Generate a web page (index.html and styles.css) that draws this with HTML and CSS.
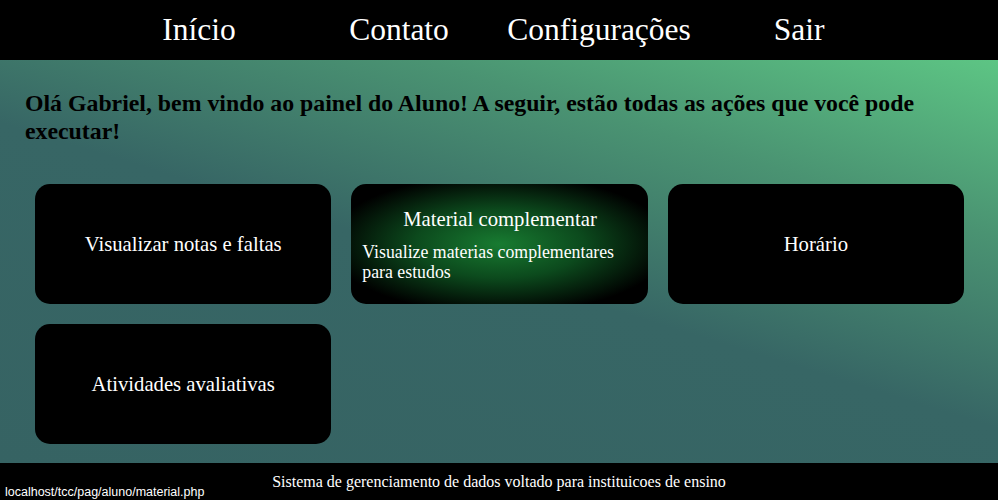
FILE: index.html
```html
<!DOCTYPE html>
<html lang="pt-BR">
<head>
<meta charset="utf-8">
<title>Painel do Aluno</title>
<link rel="stylesheet" href="styles.css">
</head>
<body>
<nav class="nav">
  <a class="nav-item" href="#">Início</a>
  <a class="nav-item" href="#">Contato</a>
  <a class="nav-item" href="#">Configurações</a>
  <a class="nav-item" href="#">Sair</a>
</nav>
<main class="main">
  <h1 class="greeting">Olá Gabriel, bem vindo ao painel do Aluno! A seguir, estão todas as ações que você pode executar!</h1>
  <section class="cards">
    <a class="card" href="#"><span class="card-title">Visualizar notas e faltas</span></a>
    <a class="card card-active" href="#">
      <span class="card-title">Material complementar</span>
      <span class="card-desc">Visualize materias complementares para estudos</span>
    </a>
    <a class="card" href="#"><span class="card-title">Horário</span></a>
    <a class="card" href="#"><span class="card-title">Atividades avaliativas</span></a>
  </section>
</main>
<footer class="footer">Sistema de gerenciamento de dados voltado para instituicoes de ensino</footer>
<div class="status">localhost/tcc/pag/aluno/material.php</div>
</body>
</html>
```
FILE: styles.css
```css
* { box-sizing: border-box; }
html, body { height: 100%; }
body {
  margin: 0;
  font-family: "Liberation Serif", "Times New Roman", serif;
  display: flex;
  flex-direction: column;
  background: #366363;
  overflow: hidden;
}
.nav {
  height: 60px;
  background: #000;
  display: flex;
  justify-content: center;
  align-items: center;
  flex-shrink: 0;
}
.nav-item {
  width: 200px;
  text-align: center;
  color: #fff;
  text-decoration: none;
  font-size: 31.5px;
  line-height: 60px;
}
.main {
  flex: 1;
  background: linear-gradient(197deg, #5dc584 0%, #4a9372 25%, #376665 52%, #366363 100%);
  padding: 29px 34px 0 35px;
}
.greeting {
  margin: 0 0 39px -10px;
  font-size: 23.8px;
  line-height: 28px;
  font-weight: bold;
  color: #000;
}
.cards {
  display: grid;
  grid-template-columns: repeat(3, 1fr);
  column-gap: 20px;
  row-gap: 20px;
}
.card {
  height: 120px;
  background: #000;
  border-radius: 15px;
  color: #fff;
  text-decoration: none;
  display: flex;
  flex-direction: column;
  justify-content: center;
  align-items: center;
  text-align: center;
}
.card-title {
  font-size: 20.7px;
}
.card-active {
  background: radial-gradient(ellipse farthest-corner at center, #187b31 0%, #0c4a1d 40%, #000 82%);
  justify-content: flex-start;
  padding: 24px 10px 0 11px;
}
.card-desc {
  align-self: stretch;
  text-align: left;
  font-size: 17.8px;
  line-height: 20px;
  margin-top: 11px;
}
.footer {
  height: 37px;
  flex-shrink: 0;
  background: #000;
  color: #fff;
  text-align: center;
  font-size: 16px;
  padding-top: 10px;
}
.status {
  position: fixed;
  left: 0;
  bottom: 0;
  padding: 1px 3px 1px 5px;
  background: #000;
  color: #fff;
  font-family: "Liberation Sans", Arial, sans-serif;
  font-size: 12.5px;
}
```
